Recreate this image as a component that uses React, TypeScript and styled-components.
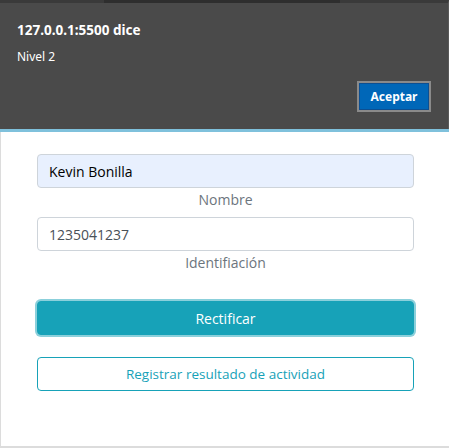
import React from "react";
import styled, { createGlobalStyle } from "styled-components";

const Global = createGlobalStyle`
  html, body { margin: 0; padding: 0; background: #ffffff; }
  * { box-sizing: border-box; }
`;

const Frame = styled.div`
  width: 449px;
  height: 448px;
  display: flex;
  flex-direction: column;
  overflow: hidden;
  font-family: "Open Sans", "Noto Sans", sans-serif;
`;

const Dialog = styled.div`
  height: 129px;
  background: #4a4a4a;
  border-top: 3px solid #3a3a3a;
  border-right: 1px solid #5a5a5a;
  display: flex;
  flex-direction: column;
  padding: 17px 17px 0 17px;
  color: #ffffff;
  position: relative;
`;

const TopShade = styled.div`
  position: absolute;
  top: -3px;
  left: 104px;
  width: 236px;
  height: 3px;
  background: #2e2e2e;
`;

const DialogTitle = styled.div`
  font-family: "Noto Sans", "Open Sans", sans-serif;
  font-weight: 700;
  font-size: 13.5px;
  line-height: 20px;
`;

const DialogMessage = styled.div`
  font-family: "Noto Sans", "Open Sans", sans-serif;
  font-size: 12px;
  line-height: 18px;
  margin-top: 8px;
`;

const DialogActions = styled.div`
  display: flex;
  justify-content: flex-end;
  margin-top: 15px;
`;

const AcceptButton = styled.button`
  width: 74px;
  height: 31px;
  border: 2px solid #8a8a8a;
  padding: 0;
  background: #0d4f91;
  display: flex;
  font-family: "Noto Sans", "Open Sans", sans-serif;
  font-weight: 700;
  font-size: 12px;
  color: #ffffff;
  cursor: pointer;
`;

const AcceptInner = styled.span`
  flex: 1;
  margin: 1px;
  background: #0067b8;
  display: flex;
  align-items: center;
  justify-content: center;
`;

const Accent = styled.div`
  height: 3px;
  background: #7fc1dc;
`;

const Page = styled.div`
  flex: 1;
  border-left: 1px solid #dcdcdc;
  border-bottom: 2px solid #dcdcdc;
  padding: 22px 35px 0 36px;
  display: flex;
  flex-direction: column;
`;

const Field = styled.div`
  display: flex;
  flex-direction: column;
  margin-bottom: 5px;
`;

const Input = styled.div<{ $autofill?: boolean }>`
  height: 34px;
  border: 1px solid #ced4da;
  border-radius: 4px;
  background: ${(p) => (p.$autofill ? "#e8f0fe" : "#ffffff")};
  color: ${(p) => (p.$autofill ? "#000000" : "#495057")};
  font-size: 14px;
  padding: 0 11px;
  display: flex;
  align-items: center;
`;

const Label = styled.div`
  text-align: center;
  color: #6c757d;
  font-size: 14px;
  line-height: 24px;
`;

const PrimaryButton = styled.button`
  margin-top: 21px;
  height: 34px;
  border: 1px solid #17a2b8;
  border-radius: 4px;
  background: #17a2b8;
  color: #ffffff;
  font-family: inherit;
  font-size: 14px;
  box-shadow: 0 0 0 2px rgba(23, 162, 184, 0.5);
  cursor: pointer;
`;

const OutlineButton = styled.button`
  margin-top: 22px;
  height: 34px;
  border: 1px solid #17a2b8;
  border-radius: 4px;
  background: #ffffff;
  color: #17a2b8;
  font-family: inherit;
  font-size: 13.5px;
  cursor: pointer;
`;

export default function App() {
  return (
    <>
      <Global />
      <Frame>
        <Dialog>
          <TopShade />
          <DialogTitle>127.0.0.1:5500 dice</DialogTitle>
          <DialogMessage>Nivel 2</DialogMessage>
          <DialogActions>
            <AcceptButton>
              <AcceptInner>Aceptar</AcceptInner>
            </AcceptButton>
          </DialogActions>
        </Dialog>
        <Accent />
        <Page>
          <Field>
            <Input $autofill>Kevin Bonilla</Input>
            <Label>Nombre</Label>
          </Field>
          <Field>
            <Input>1235041237</Input>
            <Label>Identifiación</Label>
          </Field>
          <PrimaryButton>Rectificar</PrimaryButton>
          <OutlineButton>Registrar resultado de actividad</OutlineButton>
        </Page>
      </Frame>
    </>
  );
}
